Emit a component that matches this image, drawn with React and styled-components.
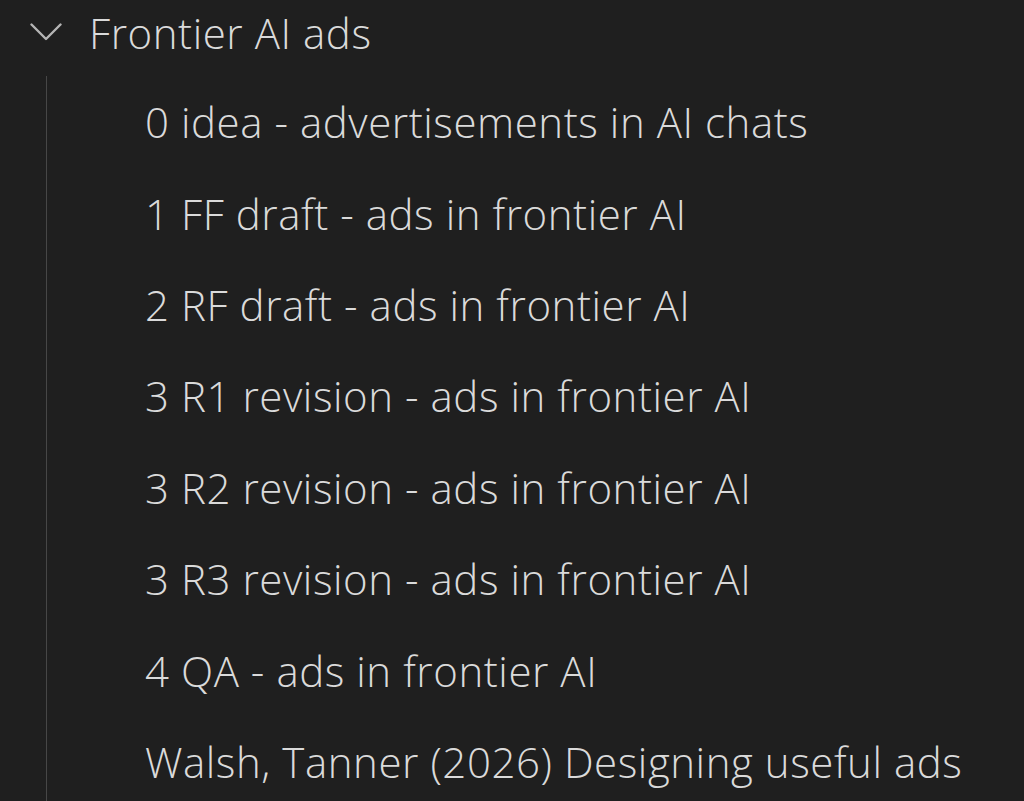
import React from 'react';
import styled, { createGlobalStyle } from 'styled-components';

const GlobalStyle = createGlobalStyle`
  html, body {
    margin: 0;
    padding: 0;
    background: #1f1f1f;
  }
  body {
    width: 1024px;
    height: 801px;
    overflow: hidden;
    font-family: 'Open Sans', 'Noto Sans', sans-serif;
  }
`;

const Tree = styled.div`
  display: flex;
  flex-direction: column;
  color: #dadada;
  font-weight: 350;
  letter-spacing: 0.55px;
`;

const FolderRow = styled.div`
  display: flex;
  align-items: center;
  height: 76px;
  padding: 0 0 12px 30px;
  box-sizing: border-box;
  gap: 27px;
  font-size: 42px;
  white-space: nowrap;
`;

const Chevron = styled.svg`
  width: 32px;
  height: 18px;
  flex-shrink: 0;
`;

const Children = styled.div`
  display: flex;
  flex-direction: column;
  margin-left: 46px;
  padding-left: 98px;
  border-left: 1px solid #474747;
`;

const FileRow = styled.div`
  display: flex;
  align-items: center;
  height: 91.43px;
  font-size: 42px;
  white-space: nowrap;
`;

const files = [
  '0 idea - advertisements in AI chats',
  '1 FF draft - ads in frontier AI',
  '2 RF draft - ads in frontier AI',
  '3 R1 revision - ads in frontier AI',
  '3 R2 revision - ads in frontier AI',
  '3 R3 revision - ads in frontier AI',
  '4 QA - ads in frontier AI',
  'Walsh, Tanner (2026) Designing useful ads',
];

export default function App() {
  return (
    <>
      <GlobalStyle />
      <Tree>
        <FolderRow>
          <Chevron viewBox="0 0 32 18" fill="none">
            <polyline
              points="1.5,1.5 16,16 30.5,1.5"
              stroke="#b4b4b4"
              strokeWidth="2.4"
              strokeLinecap="round"
              strokeLinejoin="round"
            />
          </Chevron>
          Frontier AI ads
        </FolderRow>
        <Children>
          {files.map((name) => (
            <FileRow key={name}>{name}</FileRow>
          ))}
        </Children>
      </Tree>
    </>
  );
}
